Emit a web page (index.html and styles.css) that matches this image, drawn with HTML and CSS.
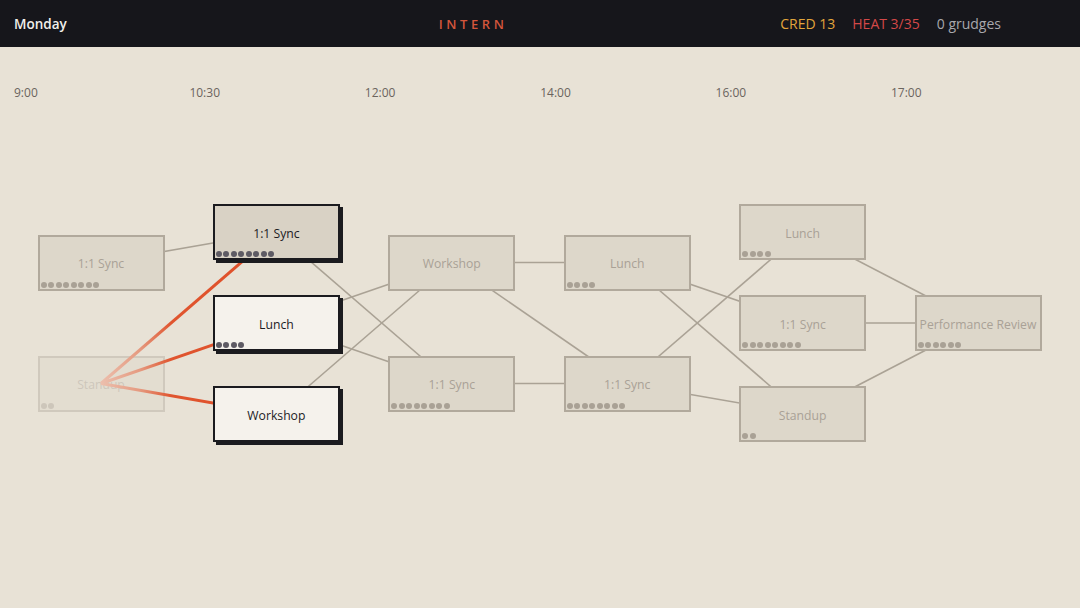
FILE: index.html
```html
<!DOCTYPE html>
<html lang="en">
<head>
  <meta charset="UTF-8">
  <meta name="viewport" content="width=device-width, initial-scale=1.0">
  <title>Intern</title>
  <link rel="stylesheet" href="styles.css">
</head>
<body>
  <header class="topbar">
    <div class="day">Monday</div>
    <div class="role">INTERN</div>
    <div class="stats">
      <span class="cred">CRED 13</span>
      <span class="heat">HEAT 3/35</span>
      <span class="grudges">0 grudges</span>
    </div>
  </header>

  <!-- Time of day for each column -->
  <div class="timeline">
    <span>9:00</span>
    <span>10:30</span>
    <span>12:00</span>
    <span>14:00</span>
    <span>16:00</span>
    <span>17:00</span>
  </div>

  <!-- Day map: meetings as nodes, links between columns -->
  <div class="board" id="board">
    <svg class="links" id="links" width="1080" height="498"></svg>
    <svg class="choices" id="choices" width="1080" height="498">
      <defs id="grads"></defs>
    </svg>
  </div>

  <script>
    const COL_W = 175.4;
    const LEFT = 37.5;
    const NODE_W = 127;
    const NODE_H = 56;

    // y is the node centre inside the board
    const nodes = [
      { id: "a1", col: 0, y: 153.5, label: "1:1 Sync", dots: 8 },
      { id: "a2", col: 0, y: 274.5, label: "Standup", dots: 2, state: "current" },
      { id: "b1", col: 1, y: 123, label: "1:1 Sync", dots: 8, state: "option hover" },
      { id: "b2", col: 1, y: 214, label: "Lunch", dots: 4, state: "option" },
      { id: "b3", col: 1, y: 305, label: "Workshop", dots: 0, state: "option" },
      { id: "c1", col: 2, y: 153.5, label: "Workshop", dots: 0 },
      { id: "c2", col: 2, y: 274.5, label: "1:1 Sync", dots: 8 },
      { id: "d1", col: 3, y: 153.5, label: "Lunch", dots: 4 },
      { id: "d2", col: 3, y: 274.5, label: "1:1 Sync", dots: 8 },
      { id: "e1", col: 4, y: 123, label: "Lunch", dots: 4 },
      { id: "e2", col: 4, y: 214, label: "1:1 Sync", dots: 8 },
      { id: "e3", col: 4, y: 305, label: "Standup", dots: 2 },
      { id: "f1", col: 5, y: 214, label: "Performance Review", dots: 6 }
    ];

    const links = [
      ["a1", "b1"],
      ["b1", "c2"], ["b2", "c1"], ["b2", "c2"], ["b3", "c1"],
      ["c1", "d1"], ["c1", "d2"], ["c2", "d2"],
      ["d1", "e2"], ["d1", "e3"], ["d2", "e1"], ["d2", "e3"],
      ["e1", "f1"], ["e2", "f1"], ["e3", "f1"]
    ];

    const choices = [["a2", "b1"], ["a2", "b2"], ["a2", "b3"]];

    const board = document.getElementById("board");
    const byId = {};
    const NS = "http://www.w3.org/2000/svg";

    nodes.forEach(n => {
      n.x = LEFT + n.col * COL_W + NODE_W / 2;
      byId[n.id] = n;

      const el = document.createElement("div");
      el.className = "node " + (n.state || "");
      el.style.left = (n.x - NODE_W / 2) + "px";
      el.style.top = (n.y - NODE_H / 2) + "px";
      el.innerHTML = `<span class="label">${n.label}</span>`;

      if (n.dots) {
        const row = document.createElement("div");
        row.className = "dots";
        row.innerHTML = "<i></i>".repeat(n.dots);
        el.appendChild(row);
      }
      board.appendChild(el);
    });

    function line(svg, a, b) {
      const l = document.createElementNS(NS, "line");
      l.setAttribute("x1", a.x);
      l.setAttribute("y1", a.y);
      l.setAttribute("x2", b.x);
      l.setAttribute("y2", b.y);
      svg.appendChild(l);
      return l;
    }

    const linkSvg = document.getElementById("links");
    links.forEach(([from, to]) => line(linkSvg, byId[from], byId[to]));

    // available moves fade in from the current node
    const choiceSvg = document.getElementById("choices");
    const grads = document.getElementById("grads");
    choices.forEach(([from, to], i) => {
      const a = byId[from], b = byId[to];
      const g = document.createElementNS(NS, "linearGradient");
      g.id = "move" + i;
      g.setAttribute("gradientUnits", "userSpaceOnUse");
      g.setAttribute("x1", a.x);
      g.setAttribute("y1", a.y);
      g.setAttribute("x2", b.x);
      g.setAttribute("y2", b.y);
      g.innerHTML = '<stop offset="0" stop-color="#ecbfad"/><stop offset="0.22" stop-color="#e59a80"/><stop offset="0.4" stop-color="#e0552f"/><stop offset="1" stop-color="#df4f28"/>';
      grads.appendChild(g);
      line(choiceSvg, a, b).setAttribute("stroke", `url(#move${i})`);
    });
  </script>
</body>
</html>
```

FILE: styles.css
```css
body {
  margin: 0;
  background: #e8e2d6;
  font-family: "Open Sans", "Noto Sans", sans-serif;
  width: 1080px;
  height: 608px;
  overflow: hidden;
}

.topbar {
  display: flex;
  align-items: center;
  height: 47px;
  padding: 0 14px;
  background: #16161b;
  box-sizing: border-box;
  font-size: 14px;
}
.day {
  color: #f1efea;
  font-size: 13.5px;
  font-weight: 600;
}
.role {
  margin-left: 372px;
  color: #d4553b;
  font-size: 13px;
  font-weight: 600;
  letter-spacing: 3.6px;
}
.stats {
  display: flex;
  gap: 17px;
  margin-left: auto;
  margin-right: 65px;
}
.cred {
  color: #e2a53c;
}
.heat {
  color: #d34848;
}
.grudges {
  color: #a8a8ac;
}

.timeline {
  display: flex;
  height: 62px;
  padding: 38px 0 0 14px;
  box-sizing: border-box;
  font-size: 12px;
  line-height: 16px;
  color: #6b645e;
}
.timeline span {
  width: 175.4px;
  flex: none;
}

.board {
  position: relative;
  height: 499px;
}
.links,
.choices {
  position: absolute;
  left: 0;
  top: 0;
}
.links {
  z-index: 1;
}
.links line {
  stroke: #aaa295;
  stroke-width: 1.6;
}
.choices {
  z-index: 3;
}
.choices line {
  stroke-width: 3;
}

.node {
  position: absolute;
  z-index: 2;
  width: 127px;
  height: 56px;
  padding-top: 2px;
  box-sizing: border-box;
  display: flex;
  align-items: center;
  justify-content: center;
  background: #ddd7ca;
  border: 2px solid #b1a99c;
  color: #a9a196;
  font-size: 12.2px;
  white-space: nowrap;
}
.node .dots {
  position: absolute;
  left: 1px;
  bottom: 1px;
  display: flex;
  gap: 1.5px;
}
.node .dots i {
  width: 6px;
  height: 6px;
  border-radius: 50%;
  background: #a9a195;
}

.node.current {
  opacity: 0.42;
}

.node.option {
  z-index: 4;
  background: #f5f2ec;
  border-color: #1b1b1f;
  box-shadow: 3px 3px 0 #1b1b1f;
  color: #1b1b1f;
}
.node.option.hover {
  background: #d9d2c5;
}
.node.option .dots i {
  background: #5e5b64;
}
```
